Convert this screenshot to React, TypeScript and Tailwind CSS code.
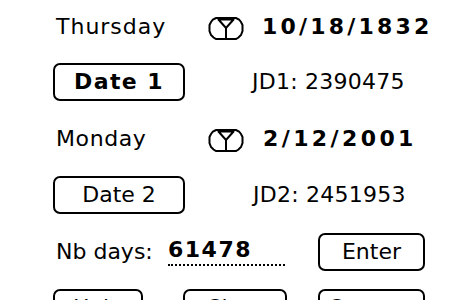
import React from "react";

const font = { fontFamily: '"DejaVu Sans", "Liberation Sans", sans-serif' };

function Icon() {
  return (
    <svg width="36" height="23" viewBox="0 0 36 23" className="shrink-0 mt-[3px]">
      <g fill="none" stroke="#000" strokeWidth="2" strokeLinejoin="miter">
        <path d="M8 1 H28 L31 2.5 L33 5 L34.5 8 V14 L33 18 L30.5 20.5 L28 22 H8 L5.5 20.5 L3 18 L1.5 14 V8 L3 5 L5 2.5 Z" />
        <path d="M10 2 L18 11 L26 2 M18 11 V21.5 M11 2.5 H25" />
      </g>
    </svg>
  );
}

function Btn({ w, children, bold }: { w: string; children: React.ReactNode; bold?: boolean }) {
  return (
    <div
      className={`${w} h-[38px] shrink-0 border-2 border-black rounded-[7px] flex items-center justify-center text-[22px] leading-[26px] text-black ${bold ? "font-bold tracking-[1.4px]" : "tracking-[0px]"}`}
    >
      {children}
    </div>
  );
}

export default function App() {
  return (
    <div className="w-[450px] h-[300px] overflow-hidden bg-white text-black" style={font}>
      <div className="pl-[53px] flex flex-col">
        <div className="h-[54px] flex items-center">
          <div className="w-[155px] pl-[3px] text-[22px] leading-[26px] tracking-[1px]">Thursday</div>
          <Icon />
          <div className="ml-[18px] text-[22px] leading-[26px] font-bold tracking-[3.2px]">10/18/1832</div>
        </div>
        <div className="h-[56.5px] flex items-center">
          <Btn w="w-[132px]" bold>Date 1</Btn>
          <div className="ml-[67px] text-[22px] leading-[26px] tracking-[0.25px]">JD1: 2390475</div>
        </div>
        <div className="h-[56.5px] flex items-center">
          <div className="w-[155px] pl-[3px] text-[22px] leading-[26px] tracking-[0.6px]">Monday</div>
          <Icon />
          <div className="ml-[19px] text-[22px] leading-[26px] font-bold tracking-[3.4px]">2/12/2001</div>
        </div>
        <div className="h-[56.5px] flex items-center">
          <Btn w="w-[132px]">Date 2</Btn>
          <div className="ml-[68px] text-[22px] leading-[26px] tracking-[0.25px]">JD2: 2451953</div>
        </div>
        <div className="h-[56.5px] flex items-center">
          <div className="w-[115px] pl-[3px] text-[22px] leading-[26px] tracking-[0px]">Nb days:</div>
          <div className="w-[117px] h-[29px] border-b-2 border-dotted border-black text-[22px] leading-[26px] font-bold tracking-[1.5px]">
            61478
          </div>
          <div className="ml-[33px]">
            <Btn w="w-[107px]">Enter</Btn>
          </div>
        </div>
        <div className="h-[56.5px] flex items-center">
          <Btn w="w-[90px]">Help</Btn>
          <div className="ml-[40px]">
            <Btn w="w-[104px]">Clear</Btn>
          </div>
          <div className="ml-[31px]">
            <Btn w="w-[107px]">Convert</Btn>
          </div>
        </div>
      </div>
    </div>
  );
}
